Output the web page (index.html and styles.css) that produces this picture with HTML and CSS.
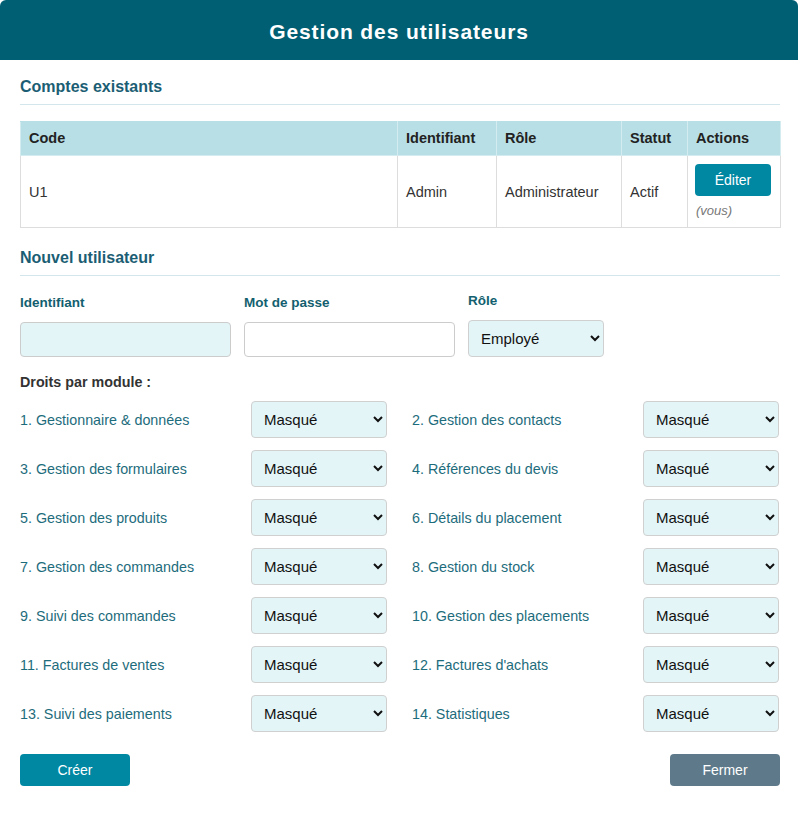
FILE: index.html
```html
<!DOCTYPE html>
<html lang="fr">
<head>
<meta charset="utf-8">
<title>Gestion des utilisateurs</title>
<link rel="stylesheet" href="styles.css">
</head>
<body>
<div class="modal">
  <header class="modal-header">
    <h1 class="modal-title">Gestion des utilisateurs</h1>
  </header>
  <div class="modal-body">
    <h2 class="section-title">Comptes existants</h2>
    <table class="users">
      <thead>
        <tr>
          <th class="c-code">Code</th>
          <th class="c-id">Identifiant</th>
          <th class="c-role">Rôle</th>
          <th class="c-status">Statut</th>
          <th class="c-actions">Actions</th>
        </tr>
      </thead>
      <tbody>
        <tr>
          <td>U1</td>
          <td>Admin</td>
          <td>Administrateur</td>
          <td>Actif</td>
          <td class="actions-cell">
            <button class="btn btn-primary btn-edit">Éditer</button>
            <span class="self">(vous)</span>
          </td>
        </tr>
      </tbody>
    </table>

    <h2 class="section-title section-new">Nouvel utilisateur</h2>
    <div class="form-row">
      <div class="field field-wide">
        <label class="field-label">Identifiant</label>
        <input class="input input-filled" type="text">
      </div>
      <div class="field field-wide">
        <label class="field-label">Mot de passe</label>
        <input class="input" type="password">
      </div>
      <div class="field field-role">
        <label class="field-label">Rôle</label>
        <select class="select"><option>Employé</option><option>Administrateur</option></select>
      </div>
    </div>

    <div class="rights-title">Droits par module :</div>
    <div class="rights-grid">
      <div class="right"><span class="right-label">1. Gestionnaire &amp; données</span><select class="select"><option>Masqué</option></select></div>
      <div class="right"><span class="right-label">2. Gestion des contacts</span><select class="select"><option>Masqué</option></select></div>
      <div class="right"><span class="right-label">3. Gestion des formulaires</span><select class="select"><option>Masqué</option></select></div>
      <div class="right"><span class="right-label">4. Références du devis</span><select class="select"><option>Masqué</option></select></div>
      <div class="right"><span class="right-label">5. Gestion des produits</span><select class="select"><option>Masqué</option></select></div>
      <div class="right"><span class="right-label">6. Détails du placement</span><select class="select"><option>Masqué</option></select></div>
      <div class="right"><span class="right-label">7. Gestion des commandes</span><select class="select"><option>Masqué</option></select></div>
      <div class="right"><span class="right-label">8. Gestion du stock</span><select class="select"><option>Masqué</option></select></div>
      <div class="right"><span class="right-label">9. Suivi des commandes</span><select class="select"><option>Masqué</option></select></div>
      <div class="right"><span class="right-label">10. Gestion des placements</span><select class="select"><option>Masqué</option></select></div>
      <div class="right"><span class="right-label">11. Factures de ventes</span><select class="select"><option>Masqué</option></select></div>
      <div class="right"><span class="right-label">12. Factures d'achats</span><select class="select"><option>Masqué</option></select></div>
      <div class="right"><span class="right-label">13. Suivi des paiements</span><select class="select"><option>Masqué</option></select></div>
      <div class="right"><span class="right-label">14. Statistiques</span><select class="select"><option>Masqué</option></select></div>
    </div>

    <div class="footer">
      <button class="btn btn-primary btn-wide">Créer</button>
      <button class="btn btn-secondary btn-wide">Fermer</button>
    </div>
  </div>
</div>
</body>
</html>
```

FILE: styles.css
```css
* { box-sizing: border-box; }

html, body {
  margin: 0;
  padding: 0;
  background: #ffffff;
}

body {
  font-family: "Liberation Sans", Arial, sans-serif;
  color: #333333;
}

.modal {
  width: 798px;
  min-height: 815px;
  background: #ffffff;
  border-radius: 6px 6px 0 0;
  overflow: hidden;
}

.modal-header {
  height: 60px;
  background: #015f73;
  display: flex;
  align-items: center;
  justify-content: center;
}

.modal-title {
  margin: 0;
  color: #ffffff;
  font-size: 21px;
  font-weight: bold;
  letter-spacing: 0.9px;
  padding-top: 3px;
}

.modal-body {
  padding: 18px 18px 20px 20px;
}

.section-title {
  margin: 0;
  font-size: 16px;
  line-height: 18px;
  font-weight: bold;
  color: #1b5e74;
  padding-bottom: 8px;
  border-bottom: 1px solid #d3e6ec;
}

.section-new {
  margin-top: 21px;
}

.users {
  width: 760px;
  margin-top: 16px;
  border-collapse: collapse;
  table-layout: fixed;
  font-size: 14.5px;
}

.users th, .users td {
  border: 1px solid #dddddd;
  padding: 8px;
  text-align: left;
  vertical-align: middle;
}

.users th {
  background: #b8dfe6;
  color: #222222;
  font-weight: bold;
  line-height: 17px;
  border-color: #d4ebef;
  border-top-color: #b8dfe6;
}

.users td {
  color: #333333;
  line-height: 18px;
}

.c-code { width: 377px; }
.c-id { width: 99px; }
.c-role { width: 125px; }
.c-status { width: 66px; }
.c-actions { width: 93px; }

.actions-cell {
  padding-right: 8px;
}

.btn {
  border: none;
  border-radius: 4px;
  color: #ffffff;
  font-family: "Liberation Sans", Arial, sans-serif;
  font-size: 14px;
  cursor: pointer;
  height: 32px;
}

.btn-primary { background: #0088a3; }
.btn-secondary { background: #5e7a8a; }

.btn-edit {
  display: block;
  width: 76px;
  padding: 0;
  margin-left: -1px;
}

.self {
  display: block;
  margin-top: 7px;
  font-size: 13px;
  line-height: 16px;
  font-style: italic;
  color: #777777;
}

.form-row {
  display: flex;
  align-items: flex-end;
  gap: 13px;
  margin-top: 17px;
}

.field {
  display: flex;
  flex-direction: column;
}

.field-wide { width: 211px; }
.field-role { width: 136px; }

.field-label {
  font-size: 13.5px;
  line-height: 16px;
  font-weight: bold;
  color: #135f6f;
  margin-bottom: 11px;
}

.input {
  height: 35px;
  border: 1px solid #cccccc;
  border-radius: 4px;
  background: #ffffff;
  font-family: "Liberation Sans", Arial, sans-serif;
  font-size: 15px;
  padding: 0 10px;
}

.input-filled { background: #e4f5f8; }

.select {
  height: 37px;
  width: 136px;
  border: 1px solid #d0d0d0;
  border-radius: 4px;
  background-color: #e4f5f8;
  color: #111111;
  font-family: "Liberation Sans", Arial, sans-serif;
  font-size: 15px;
  padding: 0 8px;
}

.rights-title {
  margin-top: 17px;
  font-size: 14.3px;
  line-height: 16px;
  font-weight: bold;
  color: #333333;
}

.rights-grid {
  margin-top: 11px;
  display: grid;
  grid-template-columns: 367px 367px;
  column-gap: 25px;
  row-gap: 12px;
}

.right {
  display: flex;
  align-items: center;
  justify-content: space-between;
}

.right-label {
  font-size: 14.3px;
  color: #1d6c7c;
}

.right .select {
  flex: 0 0 136px;
}

.footer {
  display: flex;
  justify-content: space-between;
  margin-top: 22px;
}

.btn-wide {
  width: 110px;
}
```
